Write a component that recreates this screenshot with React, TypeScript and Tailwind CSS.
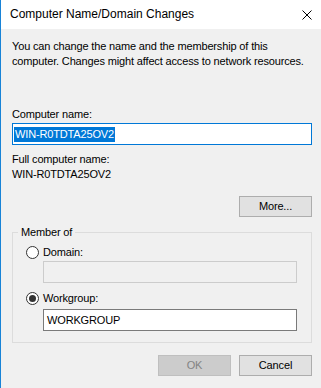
import React from 'react';

function Radio({ checked, label }: { checked?: boolean; label: string }) {
  return (
    <label className="flex h-[15px] items-center gap-[4px] leading-[15px]">
      <span className="flex h-[13px] w-[13px] items-center justify-center rounded-full border border-[#333333] bg-white">
        {checked && <span className="h-[7px] w-[7px] rounded-full bg-[#333333]" />}
      </span>
      <span>{label}</span>
    </label>
  );
}

function Button({ children, disabled }: { children: React.ReactNode; disabled?: boolean }) {
  return (
    <button
      disabled={disabled}
      className={
        disabled
          ? 'h-[21px] w-[73px] border border-[#bfbfbf] bg-[#cccccc] text-[#838383]'
          : 'h-[21px] w-[73px] border border-[#adadad] bg-[#e1e1e1] text-black'
      }
    >
      {children}
    </button>
  );
}

export default function App() {
  return (
    <div
      className="flex h-[388px] w-[321px] flex-col overflow-hidden border-l border-[#1883d7] bg-[#f0f0f0] text-[11px] leading-[15px] tracking-[-0.15px] text-black"
      style={{ fontFamily: '"Liberation Sans", Arial, sans-serif' }}
    >
      {/* Title bar */}
      <div className="flex h-[29px] shrink-0 items-center justify-between bg-white pl-[9px] pr-[8px] tracking-normal">
        <span className="text-[12px]">Computer Name/Domain Changes</span>
        <svg width="10" height="10" viewBox="0 0 10 10" className="mr-[1px]">
          <path d="M0.5 0.5 L9.5 9.5 M9.5 0.5 L0.5 9.5" stroke="#000" strokeWidth="1" />
        </svg>
      </div>

      {/* Body */}
      <div className="flex flex-col pl-[11px] pr-[9px] pt-[10px]">
        <p className="whitespace-nowrap">
          You can change the name and the membership of this
          <br />
          computer. Changes might affect access to network resources.
        </p>

        <div className="mt-[38px]">Computer name:</div>
        <div className="mt-[1px] flex h-[22px] items-center border border-[#0078d7] bg-white px-[1px]">
          <span className="bg-[#0078d7] px-[1px] text-white">WIN-R0TDTA25OV2</span>
        </div>

        <div className="mt-[7px]">Full computer name:</div>
        <div>WIN-R0TDTA25OV2</div>

        <div className="mt-[14px] flex justify-end">
          <Button>More...</Button>
        </div>

        <fieldset className="mt-[8px] border border-[#dcdcdc] px-0 pb-[11px]">
          <legend className="ml-[5px] px-[3px]">Member of</legend>
          <div className="flex flex-col pl-[13px] pr-[14px]">
            <div className="mt-[5px]">
              <Radio label="Domain:" />
            </div>
            <div className="ml-[17px] mt-[1px] h-[22px] border border-[#cccccc] bg-[#f0f0f0]" />
            <div className="mt-[8px]">
              <Radio checked label="Workgroup:" />
            </div>
            <div className="ml-[17px] mt-[3px] flex h-[22px] items-center border border-[#7a7a7a] bg-white px-[3px]">
              WORKGROUP
            </div>
          </div>
        </fieldset>

        <div className="mt-[12px] flex justify-end gap-[8px]">
          <Button disabled>OK</Button>
          <Button>Cancel</Button>
        </div>
      </div>
    </div>
  );
}
